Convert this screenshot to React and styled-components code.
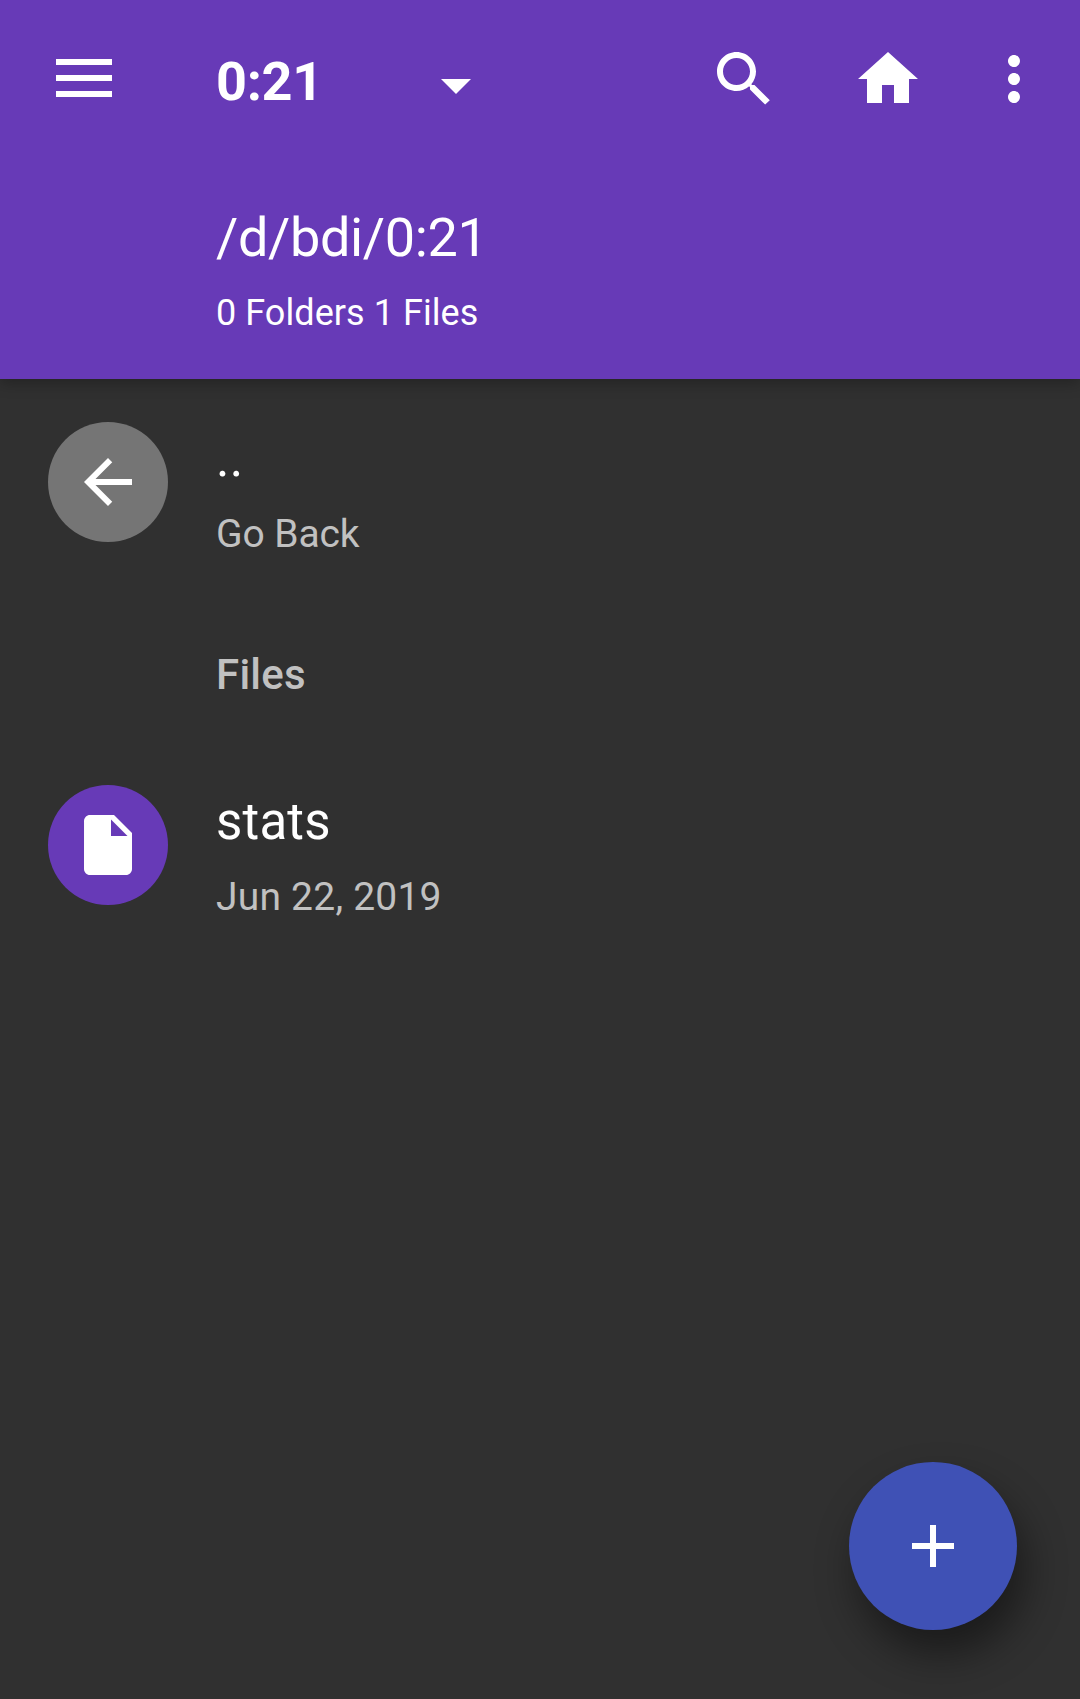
import React from "react";
import styled, { createGlobalStyle } from "styled-components";

const GlobalStyle = createGlobalStyle`
  * { box-sizing: border-box; }
  body { margin: 0; background: #303030; }
  button { font: inherit; color: inherit; border: 0; padding: 0; background: none; }
`;

const Screen = styled.div`
  display: flex;
  flex-direction: column;
  width: 100%;
  height: 1699px;
  overflow: hidden;
  background: #303030;
  color: #fff;
  font-family: Roboto, "Liberation Sans", sans-serif;
`;

const Header = styled.header`
  flex: none;
  height: 379px;
  background: #673ab7;
  box-shadow: 0 4px 14px rgba(0, 0, 0, 0.28);
`;

const Toolbar = styled.div`
  display: flex;
  align-items: center;
  height: 158px;
  padding: 0 30px 0 56px;
`;

const IconButton = styled.button`
  display: flex;
  flex: none;
  margin-left: ${(p) => p.$gap || 0}px;
`;

const Glyph = styled.svg`
  display: block;
  width: ${(p) => p.$width || 72}px;
  height: ${(p) => p.$height || 72}px;
  fill: #fff;
`;

const VolumePicker = styled.button`
  display: flex;
  align-items: center;
  justify-content: space-between;
  width: 276px;
  margin-left: 104px;
`;

const VolumeName = styled.span`
  padding-top: 5px;
  font-size: 54px;
  font-weight: 700;
  line-height: 64px;
  letter-spacing: -0.3px;
`;

const Caret = styled.span`
  padding-top: 12px;
`;

const Actions = styled.div`
  display: flex;
  margin-left: auto;
`;

const Location = styled.div`
  display: flex;
  flex-direction: column;
  padding: 48px 0 0 216px;
`;

const Path = styled.div`
  font-size: 54px;
  line-height: 64px;
  letter-spacing: -0.35px;
`;

const Summary = styled.div`
  margin-top: 22px;
  font-size: 36px;
  line-height: 42px;
  letter-spacing: 0.06px;
`;

const List = styled.main`
  flex: 1;
`;

const Row = styled.div`
  display: flex;
  align-items: flex-start;
  height: 216px;
  padding: 43px 48px 0;
`;

const Avatar = styled.div`
  display: flex;
  align-items: center;
  justify-content: center;
  width: 120px;
  height: 120px;
  border-radius: 50%;
  background: ${(p) => p.$color};
`;

const Labels = styled.div`
  display: flex;
  flex-direction: column;
  margin-left: 48px;
  padding-top: 7px;
`;

const Name = styled.div`
  font-size: 51px;
  line-height: 60px;
  letter-spacing: 0.2px;
`;

const Detail = styled.div`
  margin-top: 22px;
  color: #c1c1c1;
  font-size: 39px;
  line-height: 46px;
  letter-spacing: ${(p) => p.$tracking}px;
`;

const SectionTitle = styled.h2`
  height: 147px;
  margin: 0;
  padding: 55px 0 0 216px;
  color: #c1c1c1;
  font-size: 42px;
  font-weight: 500;
  line-height: 50px;
  letter-spacing: 0.25px;
`;

const AddButton = styled.button`
  position: absolute;
  left: 849px;
  top: 1462px;
  display: flex;
  align-items: center;
  justify-content: center;
  width: 168px;
  height: 168px;
  border-radius: 50%;
  background: #3f51b5;
  box-shadow: 8px 24px 42px rgba(0, 0, 0, 0.45);
`;

const ICONS = {
  caret: "M7 10l5 5 5-5z",
  search:
    "M15.5 14h-.79l-.28-.27C15.41 12.59 16 11.11 16 9.5 16 5.91 13.09 3 9.5 3S3 5.91 3 9.5 5.91 16 9.5 16c1.61 0 3.09-.59 4.23-1.57l.27.28v.79l5.05 5.04L20.6 19.05l-5.1-5.05zm-6 0C7.01 14 5 11.99 5 9.5S7.01 5 9.5 5 14 7.01 14 9.5 11.99 14 9.5 14z",
  home: "M10 20v-6h4v6h5v-8h3L12 3 2 12h3v8z",
  more: "M12 8c1.1 0 2-.9 2-2s-.9-2-2-2-2 .9-2 2 .9 2 2 2zm0 2c-1.1 0-2 .9-2 2s.9 2 2 2 2-.9 2-2-.9-2-2-2zm0 6c-1.1 0-2 .9-2 2s.9 2 2 2 2-.9 2-2-.9-2-2-2z",
  back: "M20 11H7.83l5.59-5.59L12 4l-8 8 8 8 1.41-1.41L7.83 13H20v-2z",
  file: "M6 2c-1.1 0-1.99.9-1.99 2L4 20c0 1.1.89 2 1.99 2H18c1.1 0 2-.9 2-2V8l-6-6H6zm7 7V3.5L18.5 9H13z",
  add: "M19 13h-6v6h-2v-6H5v-2h6V5h2v6h6v2z",
};

function Icon({ name }) {
  return (
    <Glyph viewBox="0 0 24 24" aria-hidden="true">
      <path d={ICONS[name]} />
    </Glyph>
  );
}

function Entry({ icon, color, name, detail, tracking }) {
  return (
    <Row>
      <Avatar $color={color}>
        <Icon name={icon} />
      </Avatar>
      <Labels>
        <Name>{name}</Name>
        <Detail $tracking={tracking}>{detail}</Detail>
      </Labels>
    </Row>
  );
}

export default function App() {
  return (
    <Screen>
      <GlobalStyle />
      <Header>
        <Toolbar>
          <IconButton aria-label="Menu">
            <Glyph viewBox="0 0 56 40" $width={56} $height={40}>
              <path d="M0 0h56v6H0zM0 16h56v6H0zM0 32h56v6H0z" />
            </Glyph>
          </IconButton>
          <VolumePicker>
            <VolumeName>0:21</VolumeName>
            <Caret>
              <Icon name="caret" />
            </Caret>
          </VolumePicker>
          <Actions>
            <IconButton aria-label="Search">
              <Icon name="search" />
            </IconButton>
            <IconButton aria-label="Home" $gap={72}>
              <Icon name="home" />
            </IconButton>
            <IconButton aria-label="More" $gap={54}>
              <Icon name="more" />
            </IconButton>
          </Actions>
        </Toolbar>
        <Location>
          <Path>/d/bdi/0:21</Path>
          <Summary>0 Folders 1 Files</Summary>
        </Location>
      </Header>
      <List>
        <Entry icon="back" color="#757575" name=".." detail="Go Back" tracking={-0.1} />
        <SectionTitle>Files</SectionTitle>
        <Entry icon="file" color="#673ab7" name="stats" detail="Jun 22, 2019" tracking={0.22} />
      </List>
      <AddButton aria-label="Add">
        <Icon name="add" />
      </AddButton>
    </Screen>
  );
}
